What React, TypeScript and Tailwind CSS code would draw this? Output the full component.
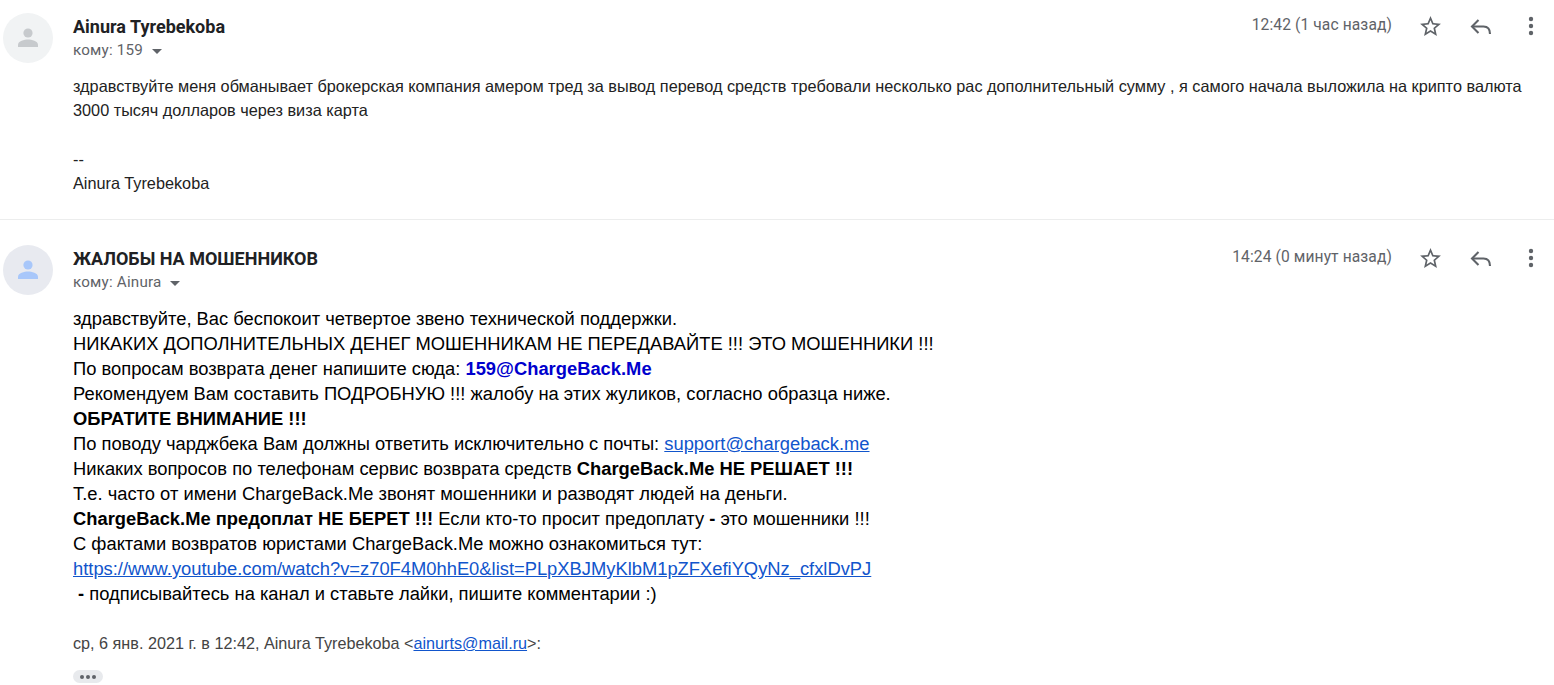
import React from "react";

const Avatar = ({ bg, fg }: { bg: string; fg: string }) => (
  <div className={`w-[50px] h-[50px] rounded-full flex items-center justify-center shrink-0 ${bg}`}>
    <svg width="22" height="24" viewBox="0 0 22 24" className={fg} fill="currentColor">
      <circle cx="11" cy="7" r="4.6" />
      <path d="M1 21v-2.2C1 15.2 7.4 13.6 11 13.6s10 1.6 10 5.2V21z" />
    </svg>
  </div>
);

const Star = () => (
  <svg width="25" height="25" viewBox="0 0 24 24" fill="#5f6368">
    <path d="M22 9.24l-7.19-.62L12 2 9.19 8.63 2 9.24l5.46 4.73L5.82 21 12 17.27 18.18 21l-1.63-7.03L22 9.24zM12 15.4l-3.76 2.27 1-4.28-3.32-2.88 4.38-.38L12 6.1l1.71 4.04 4.38.38-3.32 2.88 1 4.28L12 15.4z" />
  </svg>
);
const Reply = () => (
  <svg width="26" height="26" viewBox="0 0 26 26" fill="none" stroke="#5f6368" strokeWidth="2.1">
    <path d="M10.5 6L4 12.5l6.5 6.5" />
    <path d="M4 12.5h11.5c4 0 6.5 2.8 6.5 7.5" />
  </svg>
);
const Dots = () => (
  <svg width="24" height="24" viewBox="0 0 24 24" fill="#5f6368">
    <circle cx="12" cy="5" r="2.2" />
    <circle cx="12" cy="12" r="2.2" />
    <circle cx="12" cy="19" r="2.2" />
  </svg>
);

const Header = ({ name, to, time, bg, fg }: { name: string; to: string; time: string; bg: string; fg: string }) => (
  <div className="flex">
    <div className="w-[73px] pl-[3px] shrink-0">
      <Avatar bg={bg} fg={fg} />
    </div>
    <div className="flex-1 pt-[2px]">
      <div className="text-[18px] leading-[24px] font-bold text-[#202124] font-['Roboto',sans-serif]">{name}</div>
      <div className="flex items-center gap-[9px] text-[15.2px] leading-[22px] text-[#5f6368] font-['Roboto',sans-serif] tracking-[0.2px]">
        <span>{to}</span>
        <span className="w-0 h-0 border-x-[5.5px] border-x-transparent border-t-[5.5px] border-t-[#5f6368] mt-[2px]" />
      </div>
    </div>
    <div className="flex items-start text-[#5f6368]">
      <span className="text-[15.6px] leading-[24px] font-['Roboto',sans-serif] tracking-[0.1px] mr-[26px]">{time}</span>
      <div className="flex items-start pt-[1px] pr-[11px] gap-[25px]">
        <Star />
        <Reply />
        <Dots />
      </div>
    </div>
  </div>
);

const Blue = "text-[#1155cc] underline";

export default function App() {
  return (
    <div className="w-[1554px] h-[685px] overflow-hidden bg-white font-['Liberation_Sans',Arial,sans-serif] text-[#222222]">
      <section className="pt-[13px] h-[220px] border-b border-[#eceded]">
        <Header name="Ainura Tyrebekoba" to="кому: 159" time="12:42 (1 час назад)" bg="bg-[#f1f3f4]" fg="text-[#c7cacd]" />
        <div className="pl-[73px] pr-[20px] pt-[11px] text-[16.27px] leading-[24.3px]">
          <div>здравствуйте меня обманывает брокерская компания амером тред за вывод перевод средств требовали несколько рас дополнительный сумму , я самого начала выложила на крипто валюта 3000 тысяч долларов через виза карта</div>
          <div className="h-[24.3px]" />
          <div>--</div>
          <div>Ainura Tyrebekoba</div>
        </div>
      </section>
      <section className="pt-[25px]">
        <Header name="ЖАЛОБЫ НА МОШЕННИКОВ" to="кому: Ainura" time="14:24 (0 минут назад)" bg="bg-[#e8eaf0]" fg="text-[#a8c7fa]" />
        <div className="pl-[73px] pt-[11px]">
          <div className="text-[18.35px] leading-[25px] text-black">
            <div>здравствуйте, Вас беспокоит четвертое звено технической поддержки.</div>
            <div>НИКАКИХ ДОПОЛНИТЕЛЬНЫХ ДЕНЕГ МОШЕННИКАМ НЕ ПЕРЕДАВАЙТЕ !!! ЭТО МОШЕННИКИ !!!</div>
            <div>По вопросам возврата денег напишите сюда: <b className="text-[#0000cd]">159@ChargeBack.Me</b></div>
            <div>Рекомендуем Вам составить ПОДРОБНУЮ !!! жалобу на этих жуликов, согласно образца ниже.</div>
            <div><b>ОБРАТИТЕ ВНИМАНИЕ !!!</b></div>
            <div>По поводу чарджбека Вам должны ответить исключительно с почты: <a className={Blue}>support@chargeback.me</a></div>
            <div>Никаких вопросов по телефонам сервис возврата средств <b>ChargeBack.Me НЕ РЕШАЕТ !!!</b></div>
            <div>Т.е. часто от имени ChargeBack.Me звонят мошенники и разводят людей на деньги.</div>
            <div><b>ChargeBack.Me предоплат НЕ БЕРЕТ !!!</b> Если кто-то просит предоплату <b>-</b> это мошенники !!!</div>
            <div>С фактами возвратов юристами ChargeBack.Me можно ознакомиться тут:</div>
            <div><a className={Blue}>https://www.youtube.com/watch?v=z70F4M0hhE0&amp;list=PLpXBJMyKlbM1pZFXefiYQyNz_cfxlDvPJ</a></div>
            <div>&nbsp;<b>-</b> подписывайтесь на канал и ставьте лайки, пишите комментарии :)</div>
          </div>
          <div className="mt-[25px] text-[16.2px] leading-[25px] text-[#444]">ср, 6 янв. 2021 г. в 12:42, Ainura Tyrebekoba &lt;<a className={Blue}>ainurts@mail.ru</a>&gt;:</div>
          <div className="mt-[14px] w-[30px] h-[13px] rounded-full bg-[#e8eaed] flex items-center justify-center gap-[2px]">
            <span className="w-[4px] h-[4px] rounded-full bg-[#5f6368]" />
            <span className="w-[4px] h-[4px] rounded-full bg-[#5f6368]" />
            <span className="w-[4px] h-[4px] rounded-full bg-[#5f6368]" />
          </div>
        </div>
      </section>
    </div>
  );
}
